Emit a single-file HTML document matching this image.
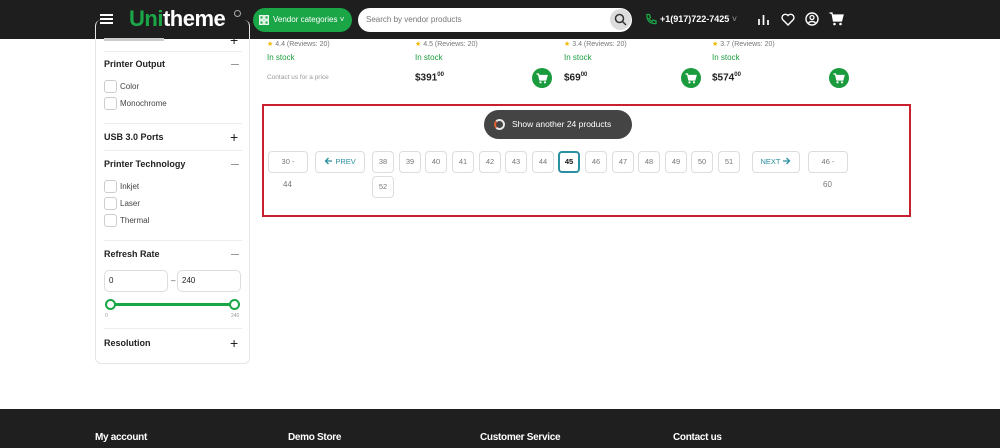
<!DOCTYPE html>
<html><head><meta charset="utf-8"><style>
*{box-sizing:border-box;margin:0;padding:0}
body{width:1000px;height:448px;overflow:hidden;background:#fff;font-family:"Liberation Sans",sans-serif;position:relative;color:#222}
.a{position:absolute}
.hdr{left:0;top:0;width:1000px;height:39px;background:#1e1e1e}
.side{left:95px;top:20px;width:155px;height:344px;border:1px solid #e6e6e6;border-radius:6px;border-top:none}
.h{font-size:9px;font-weight:bold;color:#222}
.line{height:1px;background:#ececec;width:138px;left:104px}
.cb{width:13px;height:13px;border:1px solid #ccc;border-radius:3px;background:#fff}
.lab{font-size:8px;color:#444}
.min{width:8px;height:1px;background:#999}
.pl{font-size:14px;color:#222;line-height:10px}
.pg{height:22px;border:1px solid #ddd;border-radius:4px;font-size:7.5px;color:#777;text-align:center;line-height:20px;background:#fff}
.cart{width:20px;height:20px;border-radius:50%;background:#1a9c3e}
.cart svg{position:absolute;left:4px;top:5px}
.rev{font-size:7px;color:#777}
.stk{font-size:8px;color:#1a9c3e}
.pr{font-size:10px;font-weight:bold}
.pr sup{font-size:6px}
.ft{font-size:10px;font-weight:bold;color:#fff;top:432px;letter-spacing:-0.3px}
</style></head><body>
<div class="a hdr"></div>
<div class="a" style="left:100px;top:14px;width:13px;height:2px;background:#fff;box-shadow:0 4px #fff,0 8px #fff"></div>
<div class="a" style="left:129px;top:6px;font-size:22px;font-weight:bold;color:#fff;letter-spacing:-0.5px"><span style="color:#1aa546">Uni</span>theme</div>
<div class="a" style="left:234px;top:10px;width:7px;height:7px;border:1px solid #aaa;border-radius:50%"></div>
<div class="a" style="left:253px;top:8px;width:99px;height:24px;border-radius:12px;background:#1aa546;color:#fff;font-size:8px;line-height:24px;padding-left:20px">Vendor categories ˅</div>
<svg class="a" style="left:259px;top:15px" width="10" height="10"><g fill="none" stroke="#fff" stroke-width="1.3"><rect x="0.7" y="0.7" width="3.5" height="3.5"/><rect x="5.8" y="0.7" width="3.5" height="3.5"/><rect x="0.7" y="5.8" width="3.5" height="3.5"/><rect x="5.8" y="5.8" width="3.5" height="3.5"/></g></svg>
<div class="a" style="left:358px;top:8px;width:274px;height:24px;border-radius:12px;background:#fff;font-size:8px;color:#777;line-height:24px;padding-left:8px">Search by vendor products</div>
<div class="a" style="left:610px;top:9px;width:21px;height:21px;border-radius:50%;background:#ddd"></div>
<svg class="a" style="left:614px;top:13px" width="13" height="13"><circle cx="5.5" cy="5.5" r="4" fill="none" stroke="#333" stroke-width="1.5"/><path d="M8.5 8.5L12 12" stroke="#333" stroke-width="1.5"/></svg>
<svg class="a" style="left:645px;top:13px" width="12" height="12"><path d="M2 1.5l2.5 0 1 3-1.5 1a7 7 0 0 0 3 3l1-1.5 3 1v2.5c-6 0.5-9.5-3-9-9z" fill="none" stroke="#1aa546" stroke-width="1.3"/></svg>
<div class="a" style="left:660px;top:14px;font-size:9px;font-weight:bold;color:#fff">+1(917)722-7425 <span style="color:#999;font-weight:normal">˅</span></div>
<svg class="a" style="left:757px;top:13px" width="13" height="13"><path d="M2 12V6M6.5 12V2M11 12V7" stroke="#fff" stroke-width="1.7"/></svg>
<svg class="a" style="left:781px;top:13px" width="14" height="13"><path d="M7 12L1.8 6.8A3 3 0 0 1 7 2.5a3 3 0 0 1 5.2 4.3z" fill="none" stroke="#fff" stroke-width="1.4"/></svg>
<svg class="a" style="left:805px;top:12px" width="14" height="14"><circle cx="7" cy="7" r="6" fill="none" stroke="#fff" stroke-width="1.4"/><circle cx="7" cy="5.5" r="2" fill="none" stroke="#fff" stroke-width="1.3"/><path d="M3.5 11a4 3 0 0 1 7 0" fill="none" stroke="#fff" stroke-width="1.3"/></svg>
<svg class="a" style="left:829px;top:12px" width="15" height="14"><path d="M0.5 1h2.5l1.5 8h8l1.5-6H4" fill="#fff" stroke="#fff" stroke-width="1.3"/><circle cx="5.5" cy="12" r="1.3" fill="#fff"/><circle cx="11.5" cy="12" r="1.3" fill="#fff"/></svg>

<div class="a side"></div>
<div class="a" style="left:104px;top:38px;width:60px;height:3px;background:#ccc"></div>
<div class="a pl" style="left:230px;top:35px">+</div>
<div class="a line" style="top:51px"></div>
<div class="a h" style="left:104px;top:59px">Printer Output</div><div class="a min" style="left:231px;top:64px"></div>
<div class="a cb" style="left:104px;top:80px"></div><div class="a lab" style="left:120px;top:82px">Color</div>
<div class="a cb" style="left:104px;top:97px"></div><div class="a lab" style="left:120px;top:99px">Monochrome</div>
<div class="a line" style="top:123px"></div>
<div class="a h" style="left:104px;top:132px">USB 3.0 Ports</div><div class="a pl" style="left:230px;top:132px">+</div>
<div class="a line" style="top:150px"></div>
<div class="a h" style="left:104px;top:159px">Printer Technology</div><div class="a min" style="left:231px;top:164px"></div>
<div class="a cb" style="left:104px;top:180px"></div><div class="a lab" style="left:120px;top:182px">Inkjet</div>
<div class="a cb" style="left:104px;top:197px"></div><div class="a lab" style="left:120px;top:199px">Laser</div>
<div class="a cb" style="left:104px;top:214px"></div><div class="a lab" style="left:120px;top:216px">Thermal</div>
<div class="a line" style="top:240px"></div>
<div class="a h" style="left:104px;top:249px">Refresh Rate</div><div class="a min" style="left:231px;top:254px"></div>
<div class="a" style="left:104px;top:270px;width:64px;height:22px;border:1px solid #ddd;border-radius:5px;font-size:8px;line-height:20px;padding-left:4px">0</div>
<div class="a lab" style="left:171px;top:276px">–</div>
<div class="a" style="left:177px;top:270px;width:64px;height:22px;border:1px solid #ddd;border-radius:5px;font-size:8px;line-height:20px;padding-left:4px">240</div>
<div class="a" style="left:110px;top:303px;width:124px;height:3px;background:#1aa546"></div>
<div class="a" style="left:105px;top:299px;width:11px;height:11px;border:2px solid #1aa546;border-radius:50%;background:#fff"></div>
<div class="a" style="left:229px;top:299px;width:11px;height:11px;border:2px solid #1aa546;border-radius:50%;background:#fff"></div>
<div class="a" style="left:105px;top:313px;font-size:5px;color:#999">0</div>
<div class="a" style="left:231px;top:313px;font-size:5px;color:#999">240</div>
<div class="a line" style="top:328px"></div>
<div class="a h" style="left:104px;top:338px">Resolution</div><div class="a pl" style="left:230px;top:338px">+</div>

<div class="a rev" style="left:267px;top:40px"><span style="color:#f2b600">★</span> 4.4 (Reviews: 20)</div>
<div class="a stk" style="left:267px;top:53px">In stock</div>
<div class="a" style="left:267px;top:74px;font-size:6.5px;color:#999">Contact us for a price</div>
<div class="a rev" style="left:415px;top:40px"><span style="color:#f2b600">★</span> 4.5 (Reviews: 20)</div>
<div class="a stk" style="left:415px;top:53px">In stock</div>
<div class="a pr" style="left:415px;top:72px">$391<sup>00</sup></div>
<div class="a cart" style="left:532px;top:68px"><svg width="12" height="11"><path d="M0.5 1h2l1.3 6h6l1.3-4.5H3" fill="#fff" stroke="#fff" stroke-width="1.2"/><circle cx="4.5" cy="9.3" r="1.1" fill="#fff"/><circle cx="9" cy="9.3" r="1.1" fill="#fff"/></svg></div>
<div class="a rev" style="left:564px;top:40px"><span style="color:#f2b600">★</span> 3.4 (Reviews: 20)</div>
<div class="a stk" style="left:564px;top:53px">In stock</div>
<div class="a pr" style="left:564px;top:72px">$69<sup>00</sup></div>
<div class="a cart" style="left:681px;top:68px"><svg width="12" height="11"><path d="M0.5 1h2l1.3 6h6l1.3-4.5H3" fill="#fff" stroke="#fff" stroke-width="1.2"/><circle cx="4.5" cy="9.3" r="1.1" fill="#fff"/><circle cx="9" cy="9.3" r="1.1" fill="#fff"/></svg></div>
<div class="a rev" style="left:712px;top:40px"><span style="color:#f2b600">★</span> 3.7 (Reviews: 20)</div>
<div class="a stk" style="left:712px;top:53px">In stock</div>
<div class="a pr" style="left:712px;top:72px">$574<sup>00</sup></div>
<div class="a cart" style="left:829px;top:68px"><svg width="12" height="11"><path d="M0.5 1h2l1.3 6h6l1.3-4.5H3" fill="#fff" stroke="#fff" stroke-width="1.2"/><circle cx="4.5" cy="9.3" r="1.1" fill="#fff"/><circle cx="9" cy="9.3" r="1.1" fill="#fff"/></svg></div>

<div class="a" style="left:262px;top:104px;width:649px;height:113px;border:2px solid #c8202e"></div>
<div class="a" style="left:484px;top:110px;width:148px;height:29px;border-radius:15px;background:#444;color:#fff;font-size:8.5px;line-height:29px;padding-left:28px">Show another 24 products</div>
<div class="a" style="left:494px;top:119px;width:11px;height:11px;border:2px solid #e7e7e7;border-left-color:#e06030;border-radius:50%"></div>
<div class="a pg" style="left:268px;top:151px;width:40px">30 -</div>
<div class="a lab" style="left:283px;top:180px;color:#777">44</div>
<div class="a pg" style="left:315px;top:151px;width:50px;color:#2a8fa0"><svg width="9" height="8" style="vertical-align:-1px"><path d="M8 4H1.5M4.5 1L1.5 4l3 3" fill="none" stroke="#2a8fa0" stroke-width="1.3"/></svg> PREV</div>
<div class="a pg" style="left:372px;top:151px;width:22px">38</div>
<div class="a pg" style="left:399px;top:151px;width:22px">39</div>
<div class="a pg" style="left:425px;top:151px;width:22px">40</div>
<div class="a pg" style="left:452px;top:151px;width:22px">41</div>
<div class="a pg" style="left:479px;top:151px;width:22px">42</div>
<div class="a pg" style="left:505px;top:151px;width:22px">43</div>
<div class="a pg" style="left:532px;top:151px;width:22px">44</div>
<div class="a pg" style="left:558px;top:151px;width:22px;border:2px solid #2a8fa0;color:#111;font-weight:bold;line-height:18px">45</div>
<div class="a pg" style="left:585px;top:151px;width:22px">46</div>
<div class="a pg" style="left:612px;top:151px;width:22px">47</div>
<div class="a pg" style="left:638px;top:151px;width:22px">48</div>
<div class="a pg" style="left:665px;top:151px;width:22px">49</div>
<div class="a pg" style="left:691px;top:151px;width:22px">50</div>
<div class="a pg" style="left:718px;top:151px;width:22px">51</div>
<div class="a pg" style="left:752px;top:151px;width:48px;color:#2a8fa0">NEXT <svg width="9" height="8" style="vertical-align:-1px"><path d="M1 4h6.5M4.5 1l3 3-3 3" fill="none" stroke="#2a8fa0" stroke-width="1.3"/></svg></div>
<div class="a pg" style="left:808px;top:151px;width:40px">46 -</div>
<div class="a lab" style="left:823px;top:180px;color:#777">60</div>
<div class="a pg" style="left:372px;top:176px;width:22px">52</div>

<div class="a" style="left:0;top:409px;width:1000px;height:39px;background:#1f1f1f"></div>
<div class="a ft" style="left:95px">My account</div>
<div class="a ft" style="left:288px">Demo Store</div>
<div class="a ft" style="left:480px">Customer Service</div>
<div class="a ft" style="left:673px">Contact us</div>
</body></html>
